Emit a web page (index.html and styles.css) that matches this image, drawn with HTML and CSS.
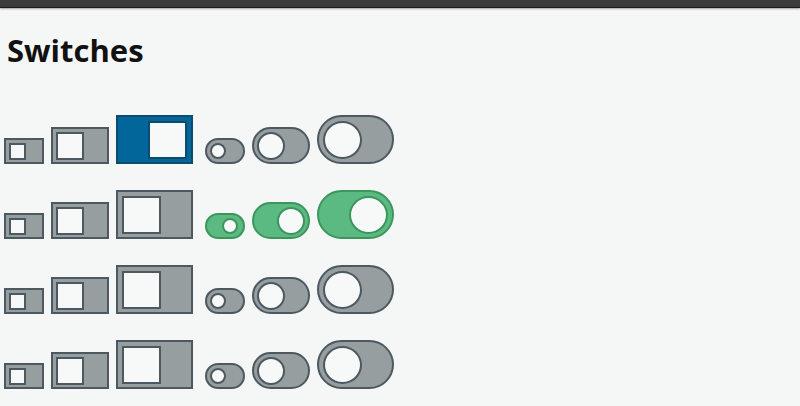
FILE: index.html
```html
<!DOCTYPE html>
<html lang="en">
<head>
    <meta charset="UTF-8">
    <meta name="viewport" content="width=device-width, initial-scale=1.0">
    <title>Switches</title>
    <link rel="stylesheet" href="styles.css">
</head>
<body>
    <header id="top-bar"></header>
    <div id="main">
        <h2 class="title">Switches</h2>
        <div class="switch-list">
            <div class="switch-row">
                <label class="switch square sm"><input type="checkbox"><span class="thumb"></span></label>
                <label class="switch square md"><input type="checkbox"><span class="thumb"></span></label>
                <label class="switch square lg checked blue"><input type="checkbox" checked><span class="thumb"></span></label>
                <label class="switch round sm first-round"><input type="checkbox"><span class="thumb"></span></label>
                <label class="switch round md"><input type="checkbox"><span class="thumb"></span></label>
                <label class="switch round lg"><input type="checkbox"><span class="thumb"></span></label>
            </div>
            <div class="switch-row">
                <label class="switch square sm"><input type="checkbox"><span class="thumb"></span></label>
                <label class="switch square md"><input type="checkbox"><span class="thumb"></span></label>
                <label class="switch square lg"><input type="checkbox"><span class="thumb"></span></label>
                <label class="switch round sm first-round green"><input type="checkbox" checked><span class="thumb"></span></label>
                <label class="switch round md checked green"><input type="checkbox" checked><span class="thumb"></span></label>
                <label class="switch round lg checked green"><input type="checkbox" checked><span class="thumb"></span></label>
            </div>
            <div class="switch-row">
                <label class="switch square sm"><input type="checkbox"><span class="thumb"></span></label>
                <label class="switch square md"><input type="checkbox"><span class="thumb"></span></label>
                <label class="switch square lg"><input type="checkbox"><span class="thumb"></span></label>
                <label class="switch round sm first-round"><input type="checkbox"><span class="thumb"></span></label>
                <label class="switch round md"><input type="checkbox"><span class="thumb"></span></label>
                <label class="switch round lg"><input type="checkbox"><span class="thumb"></span></label>
            </div>
            <div class="switch-row">
                <label class="switch square sm"><input type="checkbox"><span class="thumb"></span></label>
                <label class="switch square md"><input type="checkbox"><span class="thumb"></span></label>
                <label class="switch square lg"><input type="checkbox"><span class="thumb"></span></label>
                <label class="switch round sm first-round"><input type="checkbox"><span class="thumb"></span></label>
                <label class="switch round md"><input type="checkbox"><span class="thumb"></span></label>
                <label class="switch round lg"><input type="checkbox"><span class="thumb"></span></label>
            </div>
        </div>
    </div>
</body>
</html>
```
FILE: styles.css
```css
body {
    font-family: "Open Sans", Arial, sans-serif;
    background-color: #f5f7f7;
    margin: 0;
    overflow: hidden;
}

#top-bar {
    height: 7px;
    background-color: #3b3b3b;
    border-bottom: 1px solid #1c1c1c;
    box-shadow: 0 1px 2px rgba(0, 0, 0, 0.35);
}

#main {
    padding: 0 4px;
}

.title {
    margin: 24px 0 0 3px;
    font-size: 31px;
    font-weight: bold;
    line-height: 36px;
    color: #111;
}

.switch-list {
    display: flex;
    flex-direction: column;
    gap: 26px;
    margin-top: 47px;
}

.switch-row {
    display: flex;
    align-items: flex-end;
    gap: 7px;
}

.switch {
    box-sizing: border-box;
    display: flex;
    align-items: center;
    justify-content: flex-start;
    background-color: #979ea0;
    border: 2px solid #4c5961;
    padding: 0 3px;
    cursor: pointer;
}

.switch input {
    display: none;
}

.switch .thumb {
    box-sizing: border-box;
    display: block;
    background-color: #f7f9f9;
    border: 2px solid #4c5961;
}

.switch.checked {
    justify-content: flex-end;
}

.switch.sm {
    width: 40px;
    height: 26px;
}

.switch.sm .thumb {
    width: 17px;
    height: 17px;
}

.switch.md {
    width: 58px;
    height: 37px;
}

.switch.md .thumb {
    width: 28px;
    height: 28px;
}

.switch.lg {
    width: 77px;
    height: 49px;
    padding: 0 4px;
}

.switch.lg .thumb {
    width: 39px;
    height: 38px;
}

.round {
    border-radius: 999px;
}

.round .thumb {
    border-radius: 50%;
}

.round.sm .thumb {
    width: 16px;
    height: 16px;
}

.first-round {
    margin-left: 5px;
}

.blue {
    background-color: #02669a;
    border-color: #0c4c6c;
}

.blue .thumb {
    border-color: #0c4c6c;
}

.green {
    background-color: #5bba82;
    border-color: #3c965c;
}

.green .thumb {
    border-color: #3c965c;
}

.green.sm {
    justify-content: flex-end;
    padding-right: 5px;
}
```
